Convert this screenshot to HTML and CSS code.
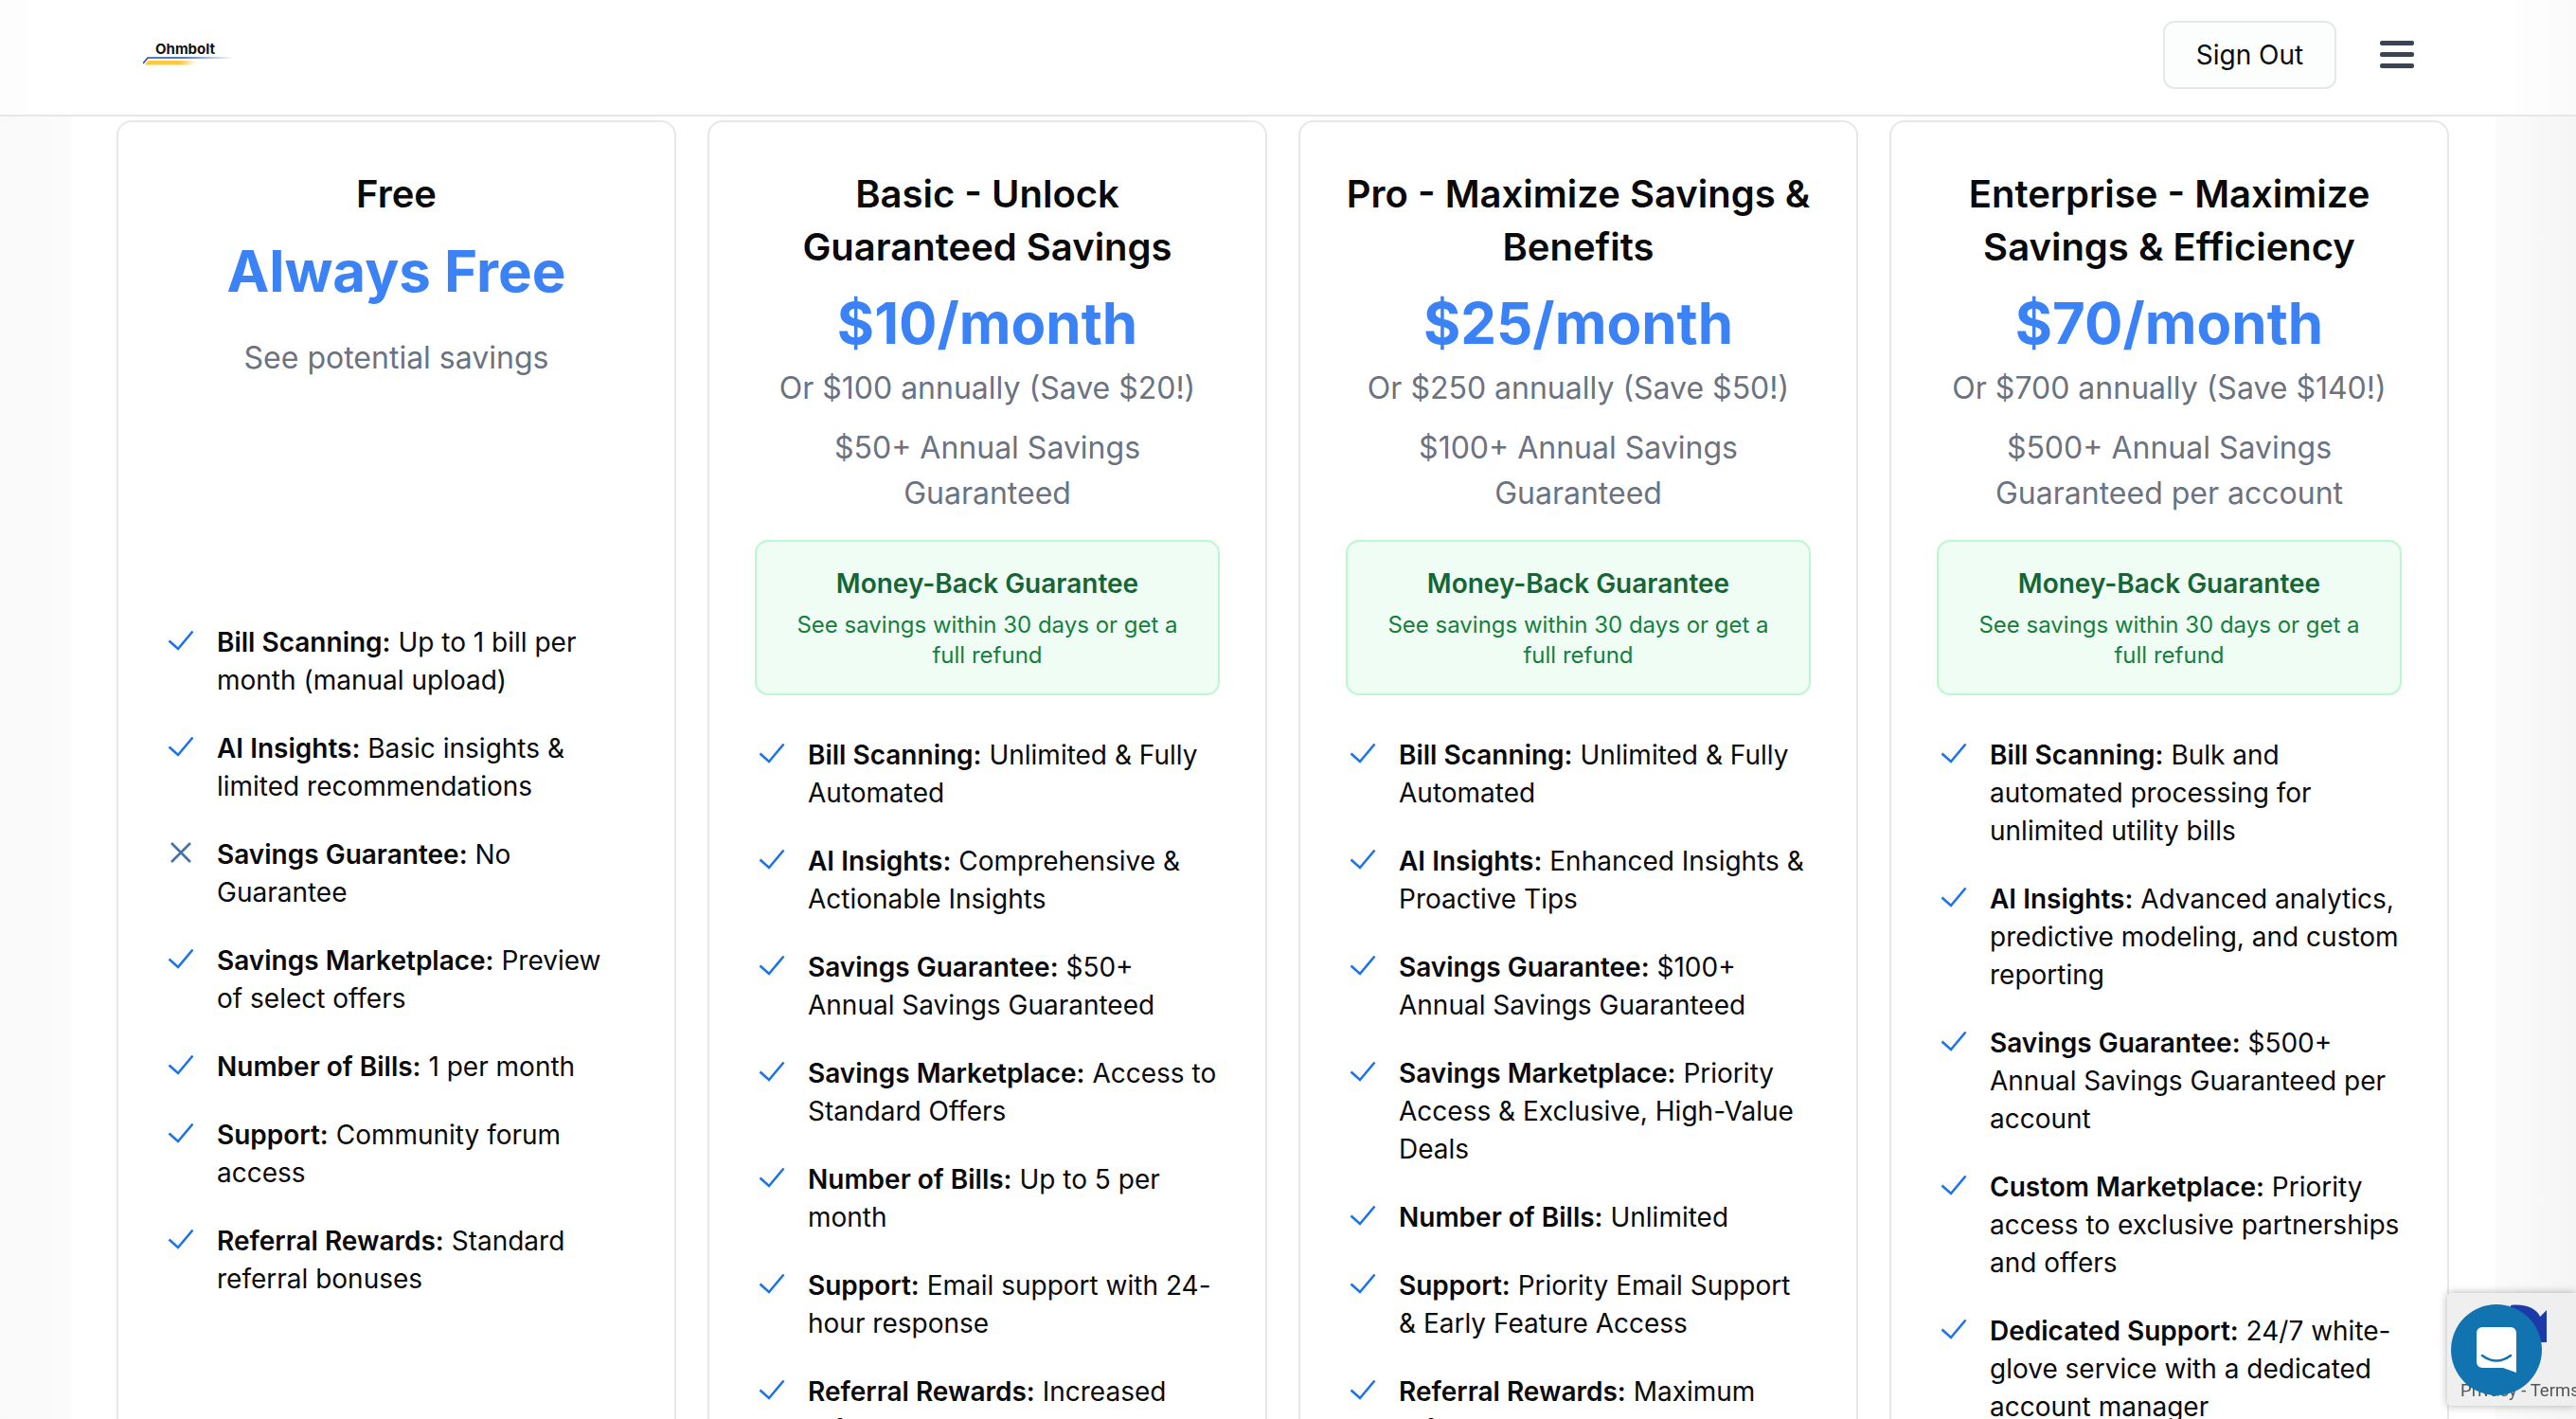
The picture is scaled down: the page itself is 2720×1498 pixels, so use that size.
FILE: index.html
```html
<!DOCTYPE html>
<html lang="en">
<head>
  <meta charset="UTF-8">
  <title>Ohmbolt - Plans</title>
  <link rel="stylesheet" href="styles.css">
</head>
<body>
  <header class="topbar">
    <div class="logo">
      <span class="logo-name">Ohmbolt</span>
      <svg class="logo-mark" width="96" height="10" viewBox="0 0 96 10">
        <defs>
          <linearGradient id="fadeBlue"><stop offset="0.45" stop-color="#1d4fb0"/><stop offset="1" stop-color="#1d4fb0" stop-opacity="0"/></linearGradient>
          <linearGradient id="fadeYellow"><stop offset="0.55" stop-color="#fcc93f"/><stop offset="0.8" stop-color="#fcc93f" stop-opacity="0"/></linearGradient>
        </defs>
        <path d="M0 7 L5 1 H96" fill="none" stroke="url(#fadeBlue)" stroke-width="1.6"/>
        <path d="M2 8.5 L5 4 H70 V8.5 Z" fill="url(#fadeYellow)"/>
      </svg>
    </div>
    <div class="topbar-actions">
      <button class="signout">Sign Out</button>
      <div class="menu-icon"><span></span><span></span><span></span></div>
    </div>
  </header>

  <main class="page">
    <div class="plans">
      <section class="plan">
        <div class="plan-head plan-head-free">
          <h2>Free</h2>
          <div class="plan-price">Always Free</div>
          <p class="plan-note">See potential savings</p>
        </div>
        <ul class="features">
          <li><svg class="ico" viewBox="0 0 28 22"><path d="M1.5 11.5 L11 20 L26.5 1.5"/></svg><span><b>Bill Scanning:</b> Up to 1 bill per month (manual upload)</span></li>
          <li><svg class="ico" viewBox="0 0 28 22"><path d="M1.5 11.5 L11 20 L26.5 1.5"/></svg><span><b>AI Insights:</b> Basic insights &amp; limited recommendations</span></li>
          <li><svg class="ico ico-no" viewBox="0 0 28 22"><path d="M4 1 L24 21 M24 1 L4 21"/></svg><span><b>Savings Guarantee:</b> No Guarantee</span></li>
          <li><svg class="ico" viewBox="0 0 28 22"><path d="M1.5 11.5 L11 20 L26.5 1.5"/></svg><span><b>Savings Marketplace:</b> Preview of select offers</span></li>
          <li><svg class="ico" viewBox="0 0 28 22"><path d="M1.5 11.5 L11 20 L26.5 1.5"/></svg><span><b>Number of Bills:</b> 1 per month</span></li>
          <li><svg class="ico" viewBox="0 0 28 22"><path d="M1.5 11.5 L11 20 L26.5 1.5"/></svg><span><b>Support:</b> Community forum access</span></li>
          <li><svg class="ico" viewBox="0 0 28 22"><path d="M1.5 11.5 L11 20 L26.5 1.5"/></svg><span><b>Referral Rewards:</b> Standard referral bonuses</span></li>
        </ul>
      </section>

      <section class="plan">
        <div class="plan-head">
          <h2>Basic - Unlock Guaranteed Savings</h2>
          <div class="plan-price">$10/month</div>
          <p class="plan-annual">Or $100 annually (Save $20!)</p>
          <p class="plan-note">$50+ Annual Savings Guaranteed</p>
        </div>
        <div class="guarantee">
          <h3>Money-Back Guarantee</h3>
          <p>See savings within 30 days or get a full refund</p>
        </div>
        <ul class="features">
          <li><svg class="ico" viewBox="0 0 28 22"><path d="M1.5 11.5 L11 20 L26.5 1.5"/></svg><span><b>Bill Scanning:</b> Unlimited &amp; Fully Automated</span></li>
          <li><svg class="ico" viewBox="0 0 28 22"><path d="M1.5 11.5 L11 20 L26.5 1.5"/></svg><span><b>AI Insights:</b> Comprehensive &amp; Actionable Insights</span></li>
          <li><svg class="ico" viewBox="0 0 28 22"><path d="M1.5 11.5 L11 20 L26.5 1.5"/></svg><span><b>Savings Guarantee:</b> $50+ Annual Savings Guaranteed</span></li>
          <li><svg class="ico" viewBox="0 0 28 22"><path d="M1.5 11.5 L11 20 L26.5 1.5"/></svg><span><b>Savings Marketplace:</b> Access to Standard Offers</span></li>
          <li><svg class="ico" viewBox="0 0 28 22"><path d="M1.5 11.5 L11 20 L26.5 1.5"/></svg><span><b>Number of Bills:</b> Up to 5 per month</span></li>
          <li><svg class="ico" viewBox="0 0 28 22"><path d="M1.5 11.5 L11 20 L26.5 1.5"/></svg><span><b>Support:</b> Email support with 24-hour response</span></li>
          <li><svg class="ico" viewBox="0 0 28 22"><path d="M1.5 11.5 L11 20 L26.5 1.5"/></svg><span><b>Referral Rewards:</b> Increased referral bonuses</span></li>
        </ul>
      </section>

      <section class="plan">
        <div class="plan-head">
          <h2>Pro - Maximize Savings &amp; Benefits</h2>
          <div class="plan-price">$25/month</div>
          <p class="plan-annual">Or $250 annually (Save $50!)</p>
          <p class="plan-note">$100+ Annual Savings Guaranteed</p>
        </div>
        <div class="guarantee">
          <h3>Money-Back Guarantee</h3>
          <p>See savings within 30 days or get a full refund</p>
        </div>
        <ul class="features">
          <li><svg class="ico" viewBox="0 0 28 22"><path d="M1.5 11.5 L11 20 L26.5 1.5"/></svg><span><b>Bill Scanning:</b> Unlimited &amp; Fully Automated</span></li>
          <li><svg class="ico" viewBox="0 0 28 22"><path d="M1.5 11.5 L11 20 L26.5 1.5"/></svg><span><b>AI Insights:</b> Enhanced Insights &amp; Proactive Tips</span></li>
          <li><svg class="ico" viewBox="0 0 28 22"><path d="M1.5 11.5 L11 20 L26.5 1.5"/></svg><span><b>Savings Guarantee:</b> $100+ Annual Savings Guaranteed</span></li>
          <li><svg class="ico" viewBox="0 0 28 22"><path d="M1.5 11.5 L11 20 L26.5 1.5"/></svg><span><b>Savings Marketplace:</b> Priority Access &amp; Exclusive, High-Value Deals</span></li>
          <li><svg class="ico" viewBox="0 0 28 22"><path d="M1.5 11.5 L11 20 L26.5 1.5"/></svg><span><b>Number of Bills:</b> Unlimited</span></li>
          <li><svg class="ico" viewBox="0 0 28 22"><path d="M1.5 11.5 L11 20 L26.5 1.5"/></svg><span><b>Support:</b> Priority Email Support &amp; Early Feature Access</span></li>
          <li><svg class="ico" viewBox="0 0 28 22"><path d="M1.5 11.5 L11 20 L26.5 1.5"/></svg><span><b>Referral Rewards:</b> Maximum referral bonuses</span></li>
        </ul>
      </section>

      <section class="plan">
        <div class="plan-head">
          <h2>Enterprise - Maximize Savings &amp; Efficiency</h2>
          <div class="plan-price">$70/month</div>
          <p class="plan-annual">Or $700 annually (Save $140!)</p>
          <p class="plan-note">$500+ Annual Savings Guaranteed per account</p>
        </div>
        <div class="guarantee">
          <h3>Money-Back Guarantee</h3>
          <p>See savings within 30 days or get a full refund</p>
        </div>
        <ul class="features">
          <li><svg class="ico" viewBox="0 0 28 22"><path d="M1.5 11.5 L11 20 L26.5 1.5"/></svg><span><b>Bill Scanning:</b> Bulk and automated processing for unlimited utility bills</span></li>
          <li><svg class="ico" viewBox="0 0 28 22"><path d="M1.5 11.5 L11 20 L26.5 1.5"/></svg><span><b>AI Insights:</b> Advanced analytics, predictive modeling, and custom reporting</span></li>
          <li><svg class="ico" viewBox="0 0 28 22"><path d="M1.5 11.5 L11 20 L26.5 1.5"/></svg><span><b>Savings Guarantee:</b> $500+ Annual Savings Guaranteed per account</span></li>
          <li><svg class="ico" viewBox="0 0 28 22"><path d="M1.5 11.5 L11 20 L26.5 1.5"/></svg><span><b>Custom Marketplace:</b> Priority access to exclusive partnerships and offers</span></li>
          <li><svg class="ico" viewBox="0 0 28 22"><path d="M1.5 11.5 L11 20 L26.5 1.5"/></svg><span><b>Dedicated Support:</b> 24/7 white-glove service with a dedicated account manager</span></li>
        </ul>
      </section>
    </div>
  </main>

  <div class="recaptcha">
    <svg class="recaptcha-arrow" width="40" height="42" viewBox="0 0 40 42">
      <path d="M0 1 C16 -1 28 5 31 13 L38 6 V40 H4 L14 30 C12 26 8 22 0 21 Z" fill="#1c3aa9"/>
    </svg>
    <span class="recaptcha-links">Privacy - Terms</span>
  </div>

  <div class="chat-launcher">
    <svg width="42" height="48" viewBox="0 0 42 48">
      <path d="M6 0 H36 A6 6 0 0 1 42 6 V48 L28 43 H6 A6 6 0 0 1 0 37 V6 A6 6 0 0 1 6 0 Z" fill="#fff"/>
      <path d="M6 30 Q21 41 36 30" fill="none" stroke="#1173af" stroke-width="2.6" stroke-linecap="round"/>
    </svg>
  </div>
</body>
</html>
```

FILE: styles.css
```css
* {
  box-sizing: border-box;
}
html, body {
  margin: 0;
  height: 100%;
  overflow: hidden;
}
body {
  font-family: Inter, "Liberation Sans", sans-serif;
  background: linear-gradient(90deg, #f9f9f9, #fbfbfb 75px, #fbfbfb 2635px, #f5f5f5);
  color: #0a0a0a;
}
.topbar {
  height: 123px;
  background: linear-gradient(90deg, #fcfcfc, #fff 40px, #fff 2650px, #f9f9f9);
  border-bottom: 2px solid #e5e7eb;
  display: flex;
  align-items: center;
  justify-content: space-between;
  padding: 0 171px 6px 151px;
}
.logo {
  display: flex;
  flex-direction: column;
  margin-top: 0;
}
.logo-name {
  font-size: 15px;
  line-height: 14px;
  font-weight: 700;
  color: #111;
  margin-left: 13px;
}
.logo-mark {
  display: block;
  margin-top: 1px;
}
.topbar-actions {
  display: flex;
  align-items: center;
  gap: 46px;
}
.signout {
  width: 183px;
  height: 72px;
  background: #fcfdfd;
  border: 2px solid #e5e7eb;
  border-radius: 12px;
  font-family: inherit;
  font-size: 28px;
  font-weight: 400;
  color: #0a0a0a;
}
.menu-icon {
  width: 36px;
  display: flex;
  flex-direction: column;
  gap: 7.5px;
}
.menu-icon span {
  height: 4.5px;
  border-radius: 2px;
  background: #3b4456;
}
.page {
  width: 2560px;
  height: 1375px;
  margin-left: 75px;
  padding: 4px 48px 0;
  background: #fff;
}
.plans {
  display: grid;
  grid-template-columns: repeat(4, 591px);
  gap: 33px;
}
.plan {
  border: 2px solid #e5e7eb;
  border-radius: 16px;
  padding: 48px 48px 48px;
  background: #fff;
}
.plan-head {
  text-align: center;
  margin-bottom: 25px;
}
.plan-head-free {
  min-height: 438px;
}
.plan-head h2 {
  margin: 0;
  font-size: 40px;
  line-height: 55.5px;
  font-weight: 600;
}
.plan-price {
  margin-top: 19px;
  font-size: 60px;
  line-height: 69.4px;
  font-weight: 700;
  color: #3b82f6;
}
.plan-annual {
  margin: 10px 0 0;
  font-size: 32px;
  line-height: 48px;
  color: #6b7280;
}
.plan-note {
  margin: 15px 0 0;
  font-size: 32px;
  line-height: 48px;
  color: #6b7280;
}
.plan-price + .plan-note {
  margin-top: 33px;
}
.guarantee {
  background: #f0fdf4;
  border: 2px solid #bbf7d0;
  border-radius: 14px;
  padding: 24px;
  text-align: center;
}
.guarantee h3 {
  margin: 0 0 8px;
  font-size: 28px;
  line-height: 40px;
  font-weight: 600;
  color: #166534;
}
.guarantee p {
  margin: 0;
  font-size: 24px;
  line-height: 32px;
  color: #15803d;
}
.features {
  list-style: none;
  margin: 43px 0 0;
  padding: 0;
  display: flex;
  flex-direction: column;
  gap: 32px;
}
.features li {
  display: flex;
  gap: 24px;
  padding-left: 4px;
  font-size: 28px;
  line-height: 40px;
}
.features b {
  font-weight: 600;
}
.ico {
  flex: none;
  width: 28px;
  height: 22px;
  margin-top: 7px;
  fill: none;
  stroke: #1a73e8;
  stroke-width: 2.6;
}
.ico-no {
  stroke: #44719f;
}
.recaptcha {
  position: fixed;
  left: 2584px;
  top: 1365px;
  width: 136px;
  height: 119px;
  background: #efefef;
  border-radius: 4px 0 0 4px;
  box-shadow: 0 0 10px rgba(0,0,0,0.3);
}
.recaptcha-arrow {
  position: absolute;
  left: 67px;
  top: 12px;
}
.recaptcha-links {
  position: absolute;
  left: 14px;
  top: 88px;
  font-family: Roboto, sans-serif;
  font-size: 18.5px;
  line-height: 30px;
  white-space: nowrap;
  color: #555;
}
.chat-launcher {
  position: fixed;
  left: 2588px;
  top: 1377px;
  width: 96px;
  height: 96px;
  border-radius: 50%;
  background: #1173af;
  display: flex;
  align-items: center;
  justify-content: center;
}
```
